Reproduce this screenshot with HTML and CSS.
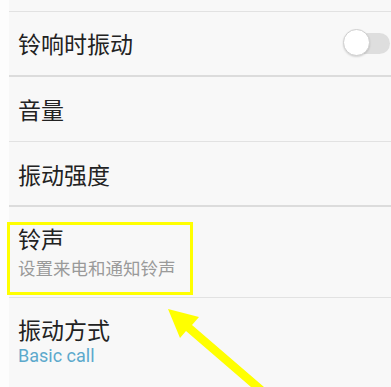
FILE: index.html
```html
<!DOCTYPE html>
<html lang="zh-CN">
<head>
<meta charset="utf-8">
<link rel="stylesheet" href="styles.css">
</head>
<body>
<div class="screen">
  <div class="strip"></div>
  <div class="list">
    <div class="row top"></div>
    <div class="row single">
      <span class="title">铃响时振动</span>
      <div class="switch"><div class="knob"></div></div>
    </div>
    <div class="row single"><span class="title">音量</span></div>
    <div class="row single"><span class="title">振动强度</span></div>
    <div class="row double ringtone">
      <span class="title">铃声</span>
      <span class="sub">设置来电和通知铃声</span>
    </div>
    <div class="row double last">
      <span class="title">振动方式</span>
      <span class="value">Basic call</span>
    </div>
  </div>
  <div class="highlight"></div>
  <svg class="arrow" width="391" height="387" viewBox="0 0 391 387">
    <polygon points="168,309 199,317 192,325 264,387 251,387 186,331 180,338" fill="#ffff00"/>
  </svg>
</div>
</body>
</html>
```
FILE: styles.css
```css
html, body {
  margin: 0;
  padding: 0;
}
body {
  width: 391px;
  height: 387px;
  overflow: hidden;
  background: #f8f8f8;
  font-family: "Noto Sans CJK SC", "Noto Sans", Roboto, sans-serif;
}
.screen {
  position: relative;
  display: flex;
  width: 391px;
  height: 387px;
  overflow: hidden;
}
.strip {
  width: 9px;
  flex: none;
  background: #fdfdfd;
}
.list {
  flex: 1;
  display: flex;
  flex-direction: column;
  background: #f8f8f8;
}
.row {
  display: flex;
  box-sizing: border-box;
  padding-left: 9px;
  border-bottom: 1px solid #e2e2e2;
}
.row.top {
  height: 12px;
}
.row.single {
  height: 66px;
  align-items: center;
  justify-content: space-between;
}
.row.single:nth-child(2) {
  border-bottom: 2px solid #dcdcdc;
}
.row.single:nth-child(4) {
  border-bottom: 2px solid #dcdcdc;
}
.row.double {
  flex-direction: column;
  justify-content: center;
  height: 92px;
}
.row.ringtone {
  padding-top: 1px;
}
.row.last {
  border-bottom: none;
  height: 90px;
  justify-content: flex-start;
  padding-top: 18px;
}
.title {
  font-size: 23px;
  line-height: 26px;
  color: #222;
}
.sub {
  font-size: 17.5px;
  line-height: 24px;
  margin-top: 5px;
  color: #9a9a9a;
}
.value {
  font-family: Roboto, "Noto Sans", sans-serif;
  font-size: 18px;
  line-height: 22px;
  margin-top: 3px;
  color: #5ca9cc;
}
.switch {
  position: relative;
  width: 41px;
  height: 21px;
  margin-right: 1px;
  border-radius: 11px;
  background: #dedede;
}
.knob {
  position: absolute;
  left: -6px;
  top: -4px;
  width: 25px;
  height: 25px;
  border-radius: 50%;
  background: #fff;
  border: 1px solid #cfcfcf;
  box-shadow: 0 1px 2px rgba(0,0,0,0.15);
}
.highlight {
  position: absolute;
  left: 7px;
  top: 222px;
  width: 180px;
  height: 67px;
  border: 3px solid #ffff00;
}
.arrow {
  position: absolute;
  left: 0;
  top: 0;
}
```
